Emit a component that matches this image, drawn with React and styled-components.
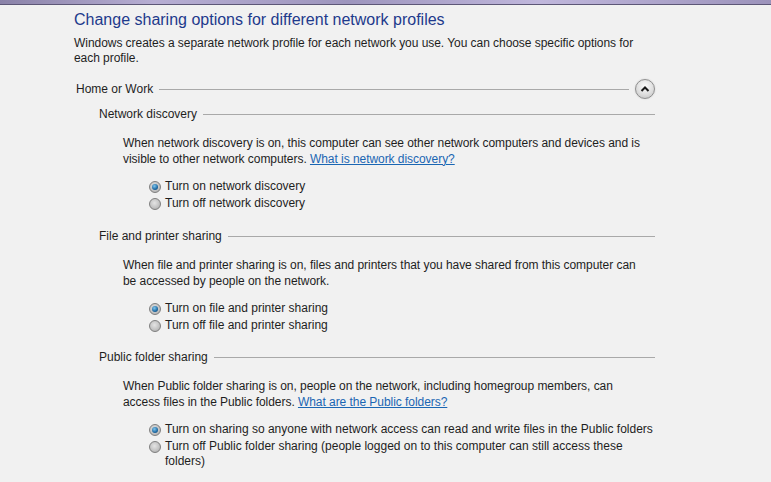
import React from "react";
import styled, { createGlobalStyle } from "styled-components";

const GlobalStyle = createGlobalStyle`
  html, body {
    margin: 0;
    padding: 0;
    background: #f0f0f0;
  }
  body {
    font-family: "Liberation Sans", Arial, sans-serif;
    font-size: 12px;
    color: #1e1e1e;
  }
`;

const Page = styled.div`
  width: 771px;
  height: 482px;
  overflow: hidden;
  background: #f1f1f1;
`;

const TopBar = styled.div`
  height: 4px;
  background: linear-gradient(
    90deg,
    #8a82a8 0%,
    #b7aed3 20%,
    #9d95bd 45%,
    #c0b7dc 70%,
    #9c93bb 100%
  );
  border-bottom: 1px solid #5d5777;
`;

const Content = styled.div`
  padding: 3px 0 0 74px;
  width: 582px;
`;

const Title = styled.h1`
  margin: 0;
  font-size: 16px;
  font-weight: normal;
  line-height: 24px;
  color: #1e3a8c;
`;

const Intro = styled.p`
  margin: 4px 0 0;
  line-height: 15px;
  letter-spacing: -0.05px;
`;

const GroupHeader = styled.div`
  display: flex;
  align-items: center;
  gap: 6px;
  margin: ${(p) => p.$top}px 0 0 ${(p) => p.$indent}px;
  height: 20px;
  width: ${(p) => p.$width}px;
  white-space: nowrap;
`;

const HeaderLine = styled.div`
  flex: 1;
  height: 1px;
  background: #a9a9a9;
`;

const CollapseButton = styled.div`
  width: 18px;
  height: 18px;
  border-radius: 50%;
  border: 1px solid #8f8f8f;
  background: radial-gradient(circle at 50% 35%, #fdfdfd 0%, #dedede 55%, #bdbdbd 100%);
  display: flex;
  align-items: center;
  justify-content: center;
  box-shadow: 0 0 2px rgba(0, 0, 0, 0.15);
`;

const Section = styled.div`
  padding-left: 49px;
`;

const Paragraph = styled.p`
  margin: 12px 0 0;
  line-height: 15.5px;
  letter-spacing: -0.05px;
`;

const Link = styled.a`
  color: #1a66b3;
  text-decoration: underline;
  cursor: pointer;
`;

const Options = styled.div`
  margin-top: 12px;
  padding-left: 26px;
  display: flex;
  flex-direction: column;
  gap: 2px;
`;

const Option = styled.label`
  display: flex;
  align-items: flex-start;
  gap: 4px;
  line-height: 15px;
`;

const Radio = styled.span`
  flex: none;
  width: 10px;
  height: 10px;
  margin-top: 2px;
  border-radius: 50%;
  border: 1px solid #7f7f7f;
  background: radial-gradient(circle at 45% 40%, #e4e4e4 0%, #c4c4c4 55%, #a2a2a2 100%);
  display: flex;
  align-items: center;
  justify-content: center;

  &::after {
    content: "";
    display: ${(p) => (p.$checked ? "block" : "none")};
    width: 6px;
    height: 6px;
    border-radius: 50%;
    background: radial-gradient(circle at 40% 35%, #7fc6ee 0%, #1f6aa3 60%, #0d3d66 100%);
  }
`;

const OptionText = styled.span`
  white-space: pre-line;
`;

const ChevronUp = () => (
  <svg width="10" height="8" viewBox="0 0 10 8">
    <path d="M1.5 6 L5 2.5 L8.5 6" fill="none" stroke="#1b1b1b" strokeWidth="2" />
  </svg>
);

const groups = [
  {
    title: "Network discovery",
    top: 5,
    text: [
      "When network discovery is on, this computer can see other network computers and devices and is",
      "visible to other network computers. ",
    ],
    link: "What is network discovery?",
    options: ["Turn on network discovery", "Turn off network discovery"],
  },
  {
    title: "File and printer sharing",
    top: 15,
    text: [
      "When file and printer sharing is on, files and printers that you have shared from this computer can",
      "be accessed by people on the network.",
    ],
    options: ["Turn on file and printer sharing", "Turn off file and printer sharing"],
  },
  {
    title: "Public folder sharing",
    top: 14,
    text: [
      "When Public folder sharing is on, people on the network, including homegroup members, can",
      "access files in the Public folders. ",
    ],
    link: "What are the Public folders?",
    options: [
      "Turn on sharing so anyone with network access can read and write files in the Public folders",
      "Turn off Public folder sharing (people logged on to this computer can still access these\nfolders)",
    ],
  },
];

export default function App() {
  return (
    <Page>
      <GlobalStyle />
      <TopBar />
      <Content>
        <Title>Change sharing options for different network profiles</Title>
        <Intro>
          Windows creates a separate network profile for each network you use. You can choose specific options for
          <br />
          each profile.
        </Intro>
        <GroupHeader $top={13} $indent={2} $width={579}>
          <span>Home or Work</span>
          <HeaderLine />
          <CollapseButton>
            <ChevronUp />
          </CollapseButton>
        </GroupHeader>
        {groups.map((g) => (
          <div key={g.title}>
            <GroupHeader $top={g.top} $indent={25} $width={556}>
              <span>{g.title}</span>
              <HeaderLine />
            </GroupHeader>
            <Section>
              <Paragraph>
                {g.text[0]}
                <br />
                {g.text[1]}
                {g.link && <Link>{g.link}</Link>}
              </Paragraph>
              <Options>
                {g.options.map((o, i) => (
                  <Option key={o}>
                    <Radio $checked={i === 0} />
                    <OptionText>{o}</OptionText>
                  </Option>
                ))}
              </Options>
            </Section>
          </div>
        ))}
      </Content>
    </Page>
  );
}
